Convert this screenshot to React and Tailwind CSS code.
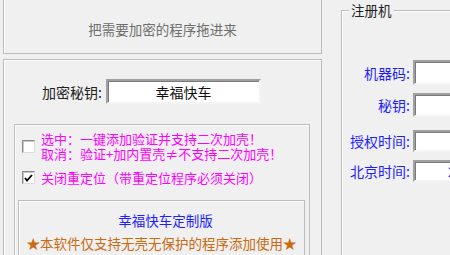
import React from 'react';

const font = { fontFamily: '"Noto Sans CJK SC", "Noto Sans", sans-serif' };

// sunken win32 edit box
const editCls =
  'bg-white border-2 border-t-[#a0a0a0] border-l-[#a0a0a0] border-b-[#f4f4f4] border-r-[#f4f4f4] shadow-[inset_1px_1px_0_#7a7a7a]';

const CheckBox = ({ checked }) => (
  <span className="w-[13px] h-[13px] shrink-0 bg-white border border-t-[#8a8a8a] border-l-[#8a8a8a] border-b-[#dcdcdc] border-r-[#dcdcdc] shadow-[inset_1px_1px_0_#c8c8c8] flex items-center justify-center">
    {checked && (
      <svg width="9" height="8" viewBox="0 0 9 8">
        <polyline points="1,4 3,6.5 8,1" fill="none" stroke="#000" strokeWidth="1.8" />
      </svg>
    )}
  </span>
);

const RegRow = ({ label, className, value }) => (
  <div className={`flex items-center ${className}`}>
    <span className="w-[67px] shrink-0 text-right text-[14px] text-[#1e1eff] leading-none pr-[3px]">{label}</span>
    <div className={`${editCls} w-[120px] h-full flex items-center pl-[33px] text-[13px] text-[#1e1eff] leading-none overflow-hidden whitespace-nowrap`}>
      {value}
    </div>
  </div>
);

export default function App() {
  return (
    <div className="w-[450px] h-[255px] overflow-hidden bg-[#f0f0f0] flex" style={font}>
      {/* left side */}
      <div className="w-[322px] shrink-0 pl-[3px] flex flex-col">
        <div className="h-[54px] shrink-0 border border-t-0 border-[#bdbdbd] shadow-[inset_1px_0_0_#ffffff] flex items-center justify-center pt-[6px]">
          <span className="text-[13.5px] text-[#6e6e6e] leading-none">把需要加密的程序拖进来</span>
        </div>

        <div className="mt-[5px] flex-1 border border-b-0 border-[#bdbdbd] shadow-[inset_1px_1px_0_#ffffff] flex flex-col">
          <div className="flex items-center pl-[38px] pt-[19px]">
            <span className="text-[14px] text-[#222] leading-none mr-[4px]">加密秘钥:</span>
            <div className={`${editCls} w-[155px] h-[25px] flex items-center justify-center text-[14px] text-[#111] leading-none`}>
              幸福快车
            </div>
          </div>

          <div className="ml-[10px] mr-[11px] mt-[20px] flex-1 border border-b-0 border-[#bdbdbd] shadow-[inset_1px_1px_0_#ffffff] flex flex-col">
            <div className="flex items-center pl-[7px] pt-[7px]">
              <CheckBox />
              <div className="ml-[6px] text-[13px] leading-[14.5px] text-[#ff00ff]">
                <div>选中：一键添加验证并支持二次加壳！</div>
                <div>取消：验证+加内置壳≠不支持二次加壳！</div>
              </div>
            </div>
            <div className="flex items-center pl-[7px] mt-[10px]">
              <CheckBox checked />
              <span className="ml-[6px] text-[13px] leading-none text-[#ff00ff]">关闭重定位（带重定位程序必须关闭）</span>
            </div>

            <div className="ml-[3px] mr-[4px] mt-[16px] flex-1 border border-b-0 border-[#bdbdbd] shadow-[inset_1px_1px_0_#ffffff] flex flex-col items-center">
              <span className="mt-[13px] text-[13.5px] leading-none text-[#1e1eff] pl-[8px]">幸福快车定制版</span>
              <span className="mt-[9px] text-[13.5px] leading-none text-[#cc6a10] whitespace-nowrap">★本软件仅支持无壳无保护的程序添加使用★</span>
            </div>
          </div>
        </div>
      </div>

      {/* right side: 注册机 group */}
      <div className="ml-[19px] pt-[10px] flex-1 flex flex-col">
        <div className="relative flex-1 border border-r-0 border-b-0 border-[#bdbdbd] shadow-[inset_1px_1px_0_#ffffff] flex flex-col pt-[49px] pl-[4px]">
          <span className="absolute left-[7px] top-[-8px] px-[2px] bg-[#f0f0f0] text-[13.5px] leading-[15px] text-[#222]">注册机</span>
          <RegRow label="机器码:" className="h-[25px]" />
          <RegRow label="秘钥:" className="h-[24px] mt-[8px]" />
          <RegRow label="授权时间:" className="h-[22px] mt-[13px]" />
          <RegRow label="北京时间:" className="h-[22px] mt-[8px]" value="2025-01-01 12:00:00" />
        </div>
      </div>
    </div>
  );
}
